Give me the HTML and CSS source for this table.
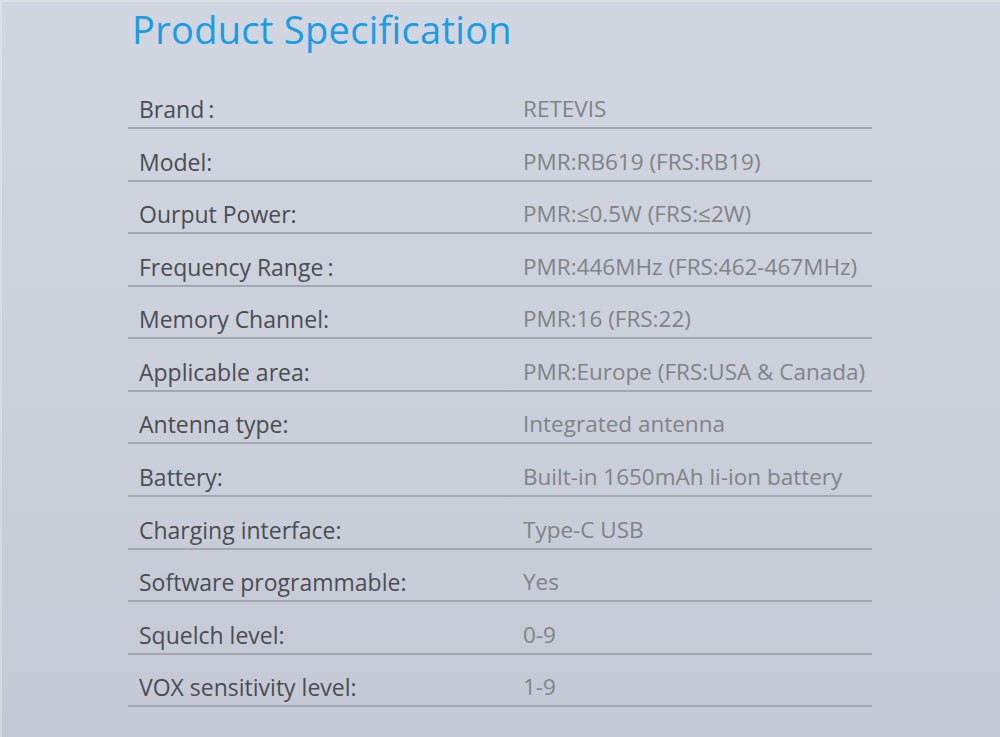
FILE: index.html
```html
<!DOCTYPE html>
<html lang="en">
<head>
<meta charset="utf-8">
<title>Product Specification</title>
<link rel="stylesheet" href="styles.css">
</head>
<body>
<main class="page">
  <h1 class="title">Product Specification</h1>
  <div class="spec">
    <div class="row"><span class="label">Brand<span class="sp">:</span></span><span class="value">RETEVIS</span></div>
    <div class="row"><span class="label">Model:</span><span class="value">PMR:RB619 (FRS:RB19)</span></div>
    <div class="row"><span class="label">Ourput Power:</span><span class="value">PMR:≤0.5W (FRS:≤2W)</span></div>
    <div class="row"><span class="label">Frequency Range<span class="sp">:</span></span><span class="value">PMR:446MHz (FRS:462-467MHz)</span></div>
    <div class="row"><span class="label">Memory Channel:</span><span class="value">PMR:16 (FRS:22)</span></div>
    <div class="row"><span class="label">Applicable area:</span><span class="value">PMR:Europe (FRS:USA &amp; Canada)</span></div>
    <div class="row"><span class="label">Antenna type:</span><span class="value">Integrated antenna</span></div>
    <div class="row"><span class="label">Battery:</span><span class="value">Built-in 1650mAh li-ion battery</span></div>
    <div class="row"><span class="label">Charging interface:</span><span class="value">Type-C USB</span></div>
    <div class="row"><span class="label">Software programmable:</span><span class="value">Yes</span></div>
    <div class="row"><span class="label">Squelch level:</span><span class="value">0-9</span></div>
    <div class="row"><span class="label">VOX sensitivity level:</span><span class="value">1-9</span></div>
  </div>
</main>
</body>
</html>
```
FILE: styles.css
```css
html, body {
  margin: 0;
  padding: 0;
  height: 100%;
}
body {
  background: linear-gradient(to bottom, #d1d6e0 0%, #cbd0db 50%, #c4c9d5 100%);
  font-family: "Open Sans", "Noto Sans", sans-serif;
  box-shadow: inset 2px 2px 0 rgba(255,255,255,0.25);
  overflow: hidden;
}
.page {
  padding-top: 5px;
  padding-left: 128px;
  width: 744px;
}
.title {
  margin: 0 0 0 4px;
  font-weight: 400;
  font-size: 38px;
  line-height: 48px;
  letter-spacing: 0.3px;
  color: #1a9de4;
  height: 48px;
}
.spec {
  margin-top: 23.6px;
  display: flex;
  flex-direction: column;
}
.row {
  display: grid;
  grid-template-columns: 395px 1fr;
  align-items: end;
  height: 50.55px;
  border-bottom: 2px solid #a2a7b1;
  box-sizing: content-box;
  font-size: 23px;
  line-height: 30px;
  white-space: nowrap;
}
.label {
  padding-left: 11px;
  color: #4b4d52;
  padding-bottom: 3px;
}
.sp {
  margin-left: 4px;
}
.value {
  color: #818388;
  font-size: 22.5px;
  padding-bottom: 3px;
}
```
